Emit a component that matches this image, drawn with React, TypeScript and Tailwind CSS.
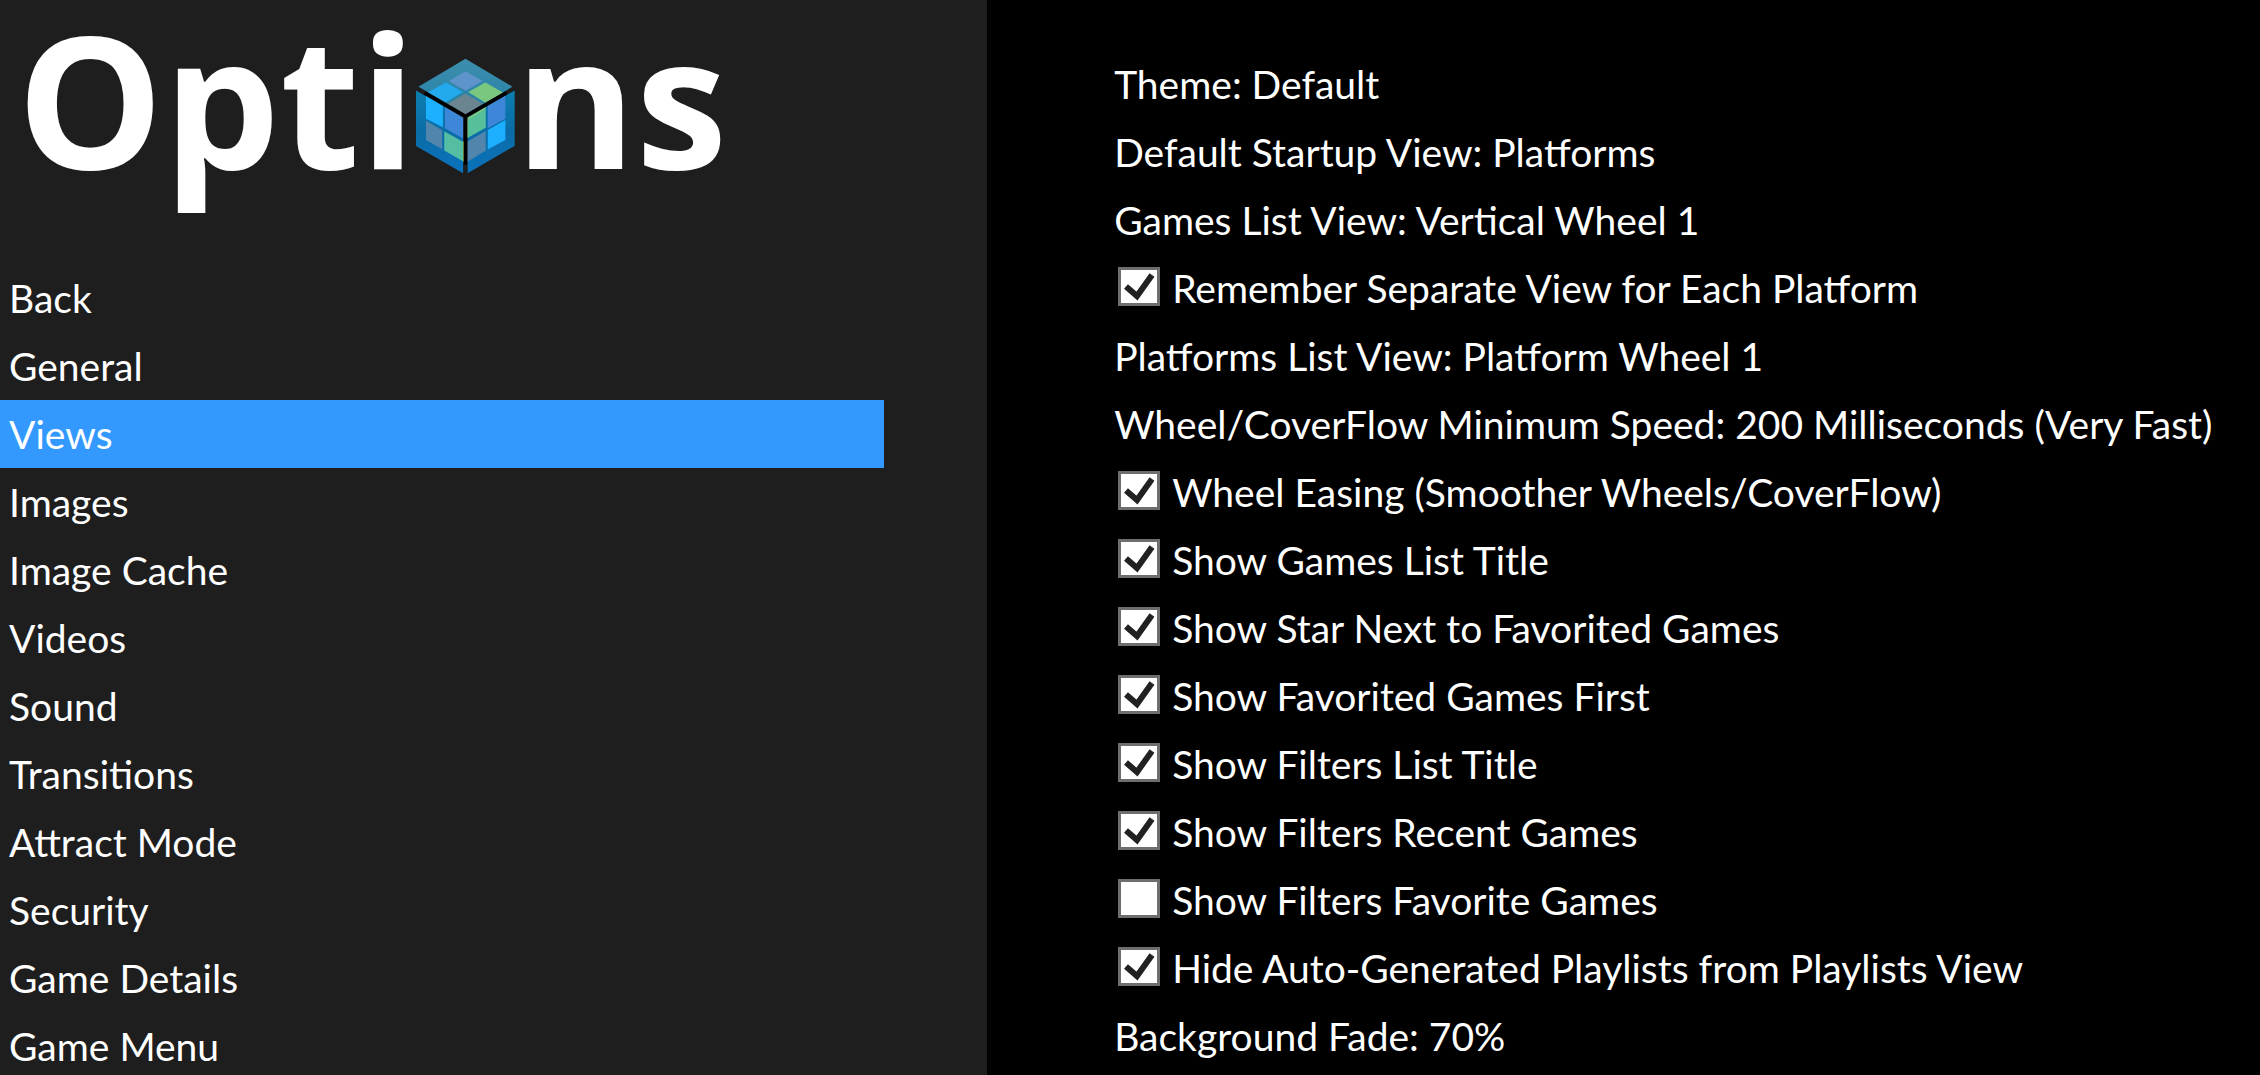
import { useState } from "react";

const menu = [
  "Back",
  "General",
  "Views",
  "Images",
  "Image Cache",
  "Videos",
  "Sound",
  "Transitions",
  "Attract Mode",
  "Security",
  "Game Details",
  "Game Menu",
];

type Option = { label: string; checked?: boolean };

const options: Option[] = [
  { label: "Theme: Default" },
  { label: "Default Startup View: Platforms" },
  { label: "Games List View: Vertical Wheel 1" },
  { label: "Remember Separate View for Each Platform", checked: true },
  { label: "Platforms List View: Platform Wheel 1" },
  { label: "Wheel/CoverFlow Minimum Speed: 200 Milliseconds (Very Fast)" },
  { label: "Wheel Easing (Smoother Wheels/CoverFlow)", checked: true },
  { label: "Show Games List Title", checked: true },
  { label: "Show Star Next to Favorited Games", checked: true },
  { label: "Show Favorited Games First", checked: true },
  { label: "Show Filters List Title", checked: true },
  { label: "Show Filters Recent Games", checked: true },
  { label: "Show Filters Favorite Games", checked: false },
  { label: "Hide Auto-Generated Playlists from Playlists View", checked: true },
  { label: "Background Fade: 70%" },
];

function Cube() {
  return (
    <svg viewBox="48 56 298 348" className="mt-[58px] h-[116px] w-[99px] shrink-0" aria-hidden="true">
      <defs>
        <linearGradient id="side" x1="0" y1="0" x2="0" y2="1">
          <stop offset="0" stopColor="#0c7fb0" />
          <stop offset="0.5" stopColor="#0a6ca6" />
          <stop offset="1" stopColor="#0b72bd" />
        </linearGradient>
        <linearGradient id="top" x1="0" y1="0" x2="0" y2="1">
          <stop offset="0" stopColor="#3f8fae" />
          <stop offset="1" stopColor="#1f7fa5" />
        </linearGradient>
      </defs>
      <polygon points="197,58 339,142 197,228 55,142" fill="url(#top)" />
      <polygon points="197,95 248,125 197,154 147,125" fill="#5f93cb" />
      <polygon points="138,129 189,158 135,190 82,160" fill="#23aaee" />
      <polygon points="257,129 311,160 257,190 205,158" fill="#7ac880" />
      <polygon points="197,162 249,193 197,226 144,193" fill="#6b8590" />
      <polygon points="48,153 190,235 190,402 48,320" fill="url(#side)" />
      <polygon points="78,170 129,200 129,264 78,238" fill="#1db0ff" />
      <polygon points="135,203 190,235 190,298 135,267" fill="#3d86d8" />
      <polygon points="78,244 127,273 127,330 78,302" fill="#5285ac" />
      <polygon points="133,276 192,309 192,368 133,334" fill="#55bda2" />
      <polygon points="203,235 345,153 345,320 203,402" fill="url(#side)" />
      <polygon points="203,233 258,202 258,265 203,296" fill="#58bf9b" />
      <polygon points="264,199 317,169 317,238 264,267" fill="#3d86d8" />
      <polygon points="203,307 258,275 258,334 203,368" fill="#5285ac" />
      <polygon points="264,272 317,242 317,302 264,331" fill="#1caeff" />
      <polyline points="192,305 192,366" fill="none" stroke="#c6d62c" strokeWidth="3" />
      <polyline points="203,294 203,240 255,207" fill="none" stroke="#b4d94c" strokeWidth="2" />
      <path d="M52 147 197 231 342 147M197 231V404" fill="none" stroke="#1e1e1e" strokeWidth="11" />
      <path d="M74 160 197 231 320 160M197 231V377" fill="none" stroke="#000" strokeWidth="10" />
    </svg>
  );
}

function CheckOption({ option }: { option: Option }) {
  const [checked, setChecked] = useState(option.checked);
  return (
    <label className="flex h-[68px] items-center gap-3 pl-1 whitespace-nowrap">
      <span className="relative mb-1 h-[39px] w-[42px] shrink-0">
        <input
          type="checkbox"
          checked={checked}
          onChange={(e) => setChecked(e.target.checked)}
          className="block h-full w-full appearance-none border-3 border-[#6e6e6e] bg-white"
        />
        {checked && (
          <svg viewBox="0 0 42 39" className="pointer-events-none absolute inset-0 h-full w-full" aria-hidden="true">
            <path d="M8 19.500 19 29 34 8" fill="none" stroke="#212121" strokeWidth="6" />
          </svg>
        )}
      </span>
      {option.label}
    </label>
  );
}

export default function App() {
  const [active, setActive] = useState("Views");
  return (
    <div className="flex h-screen overflow-hidden bg-black font-['Lato',sans-serif] text-[39px] leading-[68px] text-white">
      <aside className="w-[43.68%] shrink-0 bg-[#1e1e1e]">
        <h1
          aria-label="Options"
          className="flex h-[264px] items-start pl-[17px] font-['Open_Sans',sans-serif] text-[184px] leading-[196px] font-bold"
        >
          <span>Opti</span>
          <Cube />
          <span>ns</span>
        </h1>
        <nav className="mr-[103px] flex flex-col">
          {menu.map((item) => (
            <button
              key={item}
              type="button"
              onClick={() => setActive(item)}
              className={
                item === active
                  ? "h-[68px] bg-[#3399ff] pl-[9px] text-left"
                  : "h-[68px] pl-[9px] text-left"
              }
            >
              {item}
            </button>
          ))}
        </nav>
      </aside>
      <main className="flex min-w-0 flex-1 flex-col pt-[50px] pl-[127px]">
        {options.map((option) =>
          option.checked === undefined ? (
            <button key={option.label} type="button" className="h-[68px] text-left whitespace-nowrap">
              {option.label}
            </button>
          ) : (
            <CheckOption key={option.label} option={option} />
          ),
        )}
      </main>
    </div>
  );
}
